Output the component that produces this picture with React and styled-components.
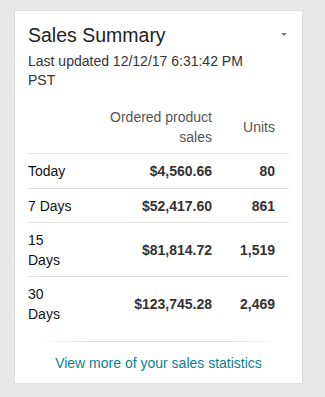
import React from "react";
import styled, { createGlobalStyle } from "styled-components";

const GlobalStyle = createGlobalStyle`
  html, body {
    margin: 0;
    background: #e7e7e7;
    font-family: "Liberation Sans", Arial, sans-serif;
  }
`;

const Page = styled.div`
  padding: 10px 0 0 14px;
  min-height: 397px;
  box-sizing: border-box;
`;

const Card = styled.section`
  width: 289px;
  box-sizing: border-box;
  background: #fff;
  border: 1px solid #dcdcdc;
  padding: 12px 13px 0 13px;
`;

const Header = styled.div`
  display: flex;
  justify-content: space-between;
  align-items: flex-start;
`;

const Title = styled.h2`
  margin: 0;
  font-size: 19.5px;
  line-height: 24px;
  font-weight: normal;
  color: #222;
`;

const Caret = styled.span`
  margin: 10px 2px 0 0;
  width: 0;
  height: 0;
  border-left: 3.5px solid transparent;
  border-right: 3.5px solid transparent;
  border-top: 3.5px solid #7a7a7a;
`;

const Updated = styled.p`
  margin: 5px 0 0;
  font-size: 14px;
  line-height: 19px;
  color: #333;
  width: 230px;
`;

const Table = styled.div`
  margin-top: 18px;
  display: grid;
  grid-template-columns: 47px 1fr 77px;
`;

const Cell = styled.div`
  padding: ${(p) => (p.$head ? "0 0 6px" : "8px 0 6px")};
  padding-left: ${(p) => (p.$num ? "16px" : "0")};
  padding-right: ${(p) => (p.$last ? "14px" : "0")};
  font-size: 14px;
  line-height: 19.5px;
  color: ${(p) => (p.$head ? "#555" : p.$bold ? "#333" : "#111")};
  font-weight: ${(p) => (p.$bold ? "bold" : "normal")};
  text-align: ${(p) => (p.$num ? "right" : "left")};
  display: flex;
  align-items: center;
  justify-content: ${(p) => (p.$num ? "flex-end" : "flex-start")};
  border-top: ${(p) => (p.$rule ? "1px solid #e3e3e3" : "none")};
`;

const Footer = styled.div`
  margin-top: 11px;
  padding: 12px 0 10px;
  text-align: center;
  position: relative;

  &::before {
    content: "";
    position: absolute;
    top: 0;
    left: 12px;
    right: 12px;
    height: 1px;
    background: linear-gradient(to right, rgba(221,221,221,0), #dddddd 20%, #dddddd 80%, rgba(221,221,221,0));
  }
`;

const MoreLink = styled.a`
  font-size: 14px;
  line-height: 20px;
  color: #0a7f92;
  text-decoration: none;
`;

const rows = [
  ["Today", "$4,560.66", "80"],
  ["7 Days", "$52,417.60", "861"],
  ["15 Days", "$81,814.72", "1,519"],
  ["30 Days", "$123,745.28", "2,469"],
];

export default function App() {
  return (
    <>
      <GlobalStyle />
      <Page>
        <Card>
          <Header>
            <Title>Sales Summary</Title>
            <Caret />
          </Header>
          <Updated>Last updated 12/12/17 6:31:42 PM PST</Updated>
          <Table>
            <Cell $head />
            <Cell $head $num>Ordered product sales</Cell>
            <Cell $head $num $last>Units</Cell>
            {rows.map(([label, sales, units]) => (
              <React.Fragment key={label}>
                <Cell $rule>{label}</Cell>
                <Cell $rule $num $bold>{sales}</Cell>
                <Cell $rule $num $bold $last>{units}</Cell>
              </React.Fragment>
            ))}
          </Table>
          <Footer>
            <MoreLink href="#">View more of your sales statistics</MoreLink>
          </Footer>
        </Card>
      </Page>
    </>
  );
}
